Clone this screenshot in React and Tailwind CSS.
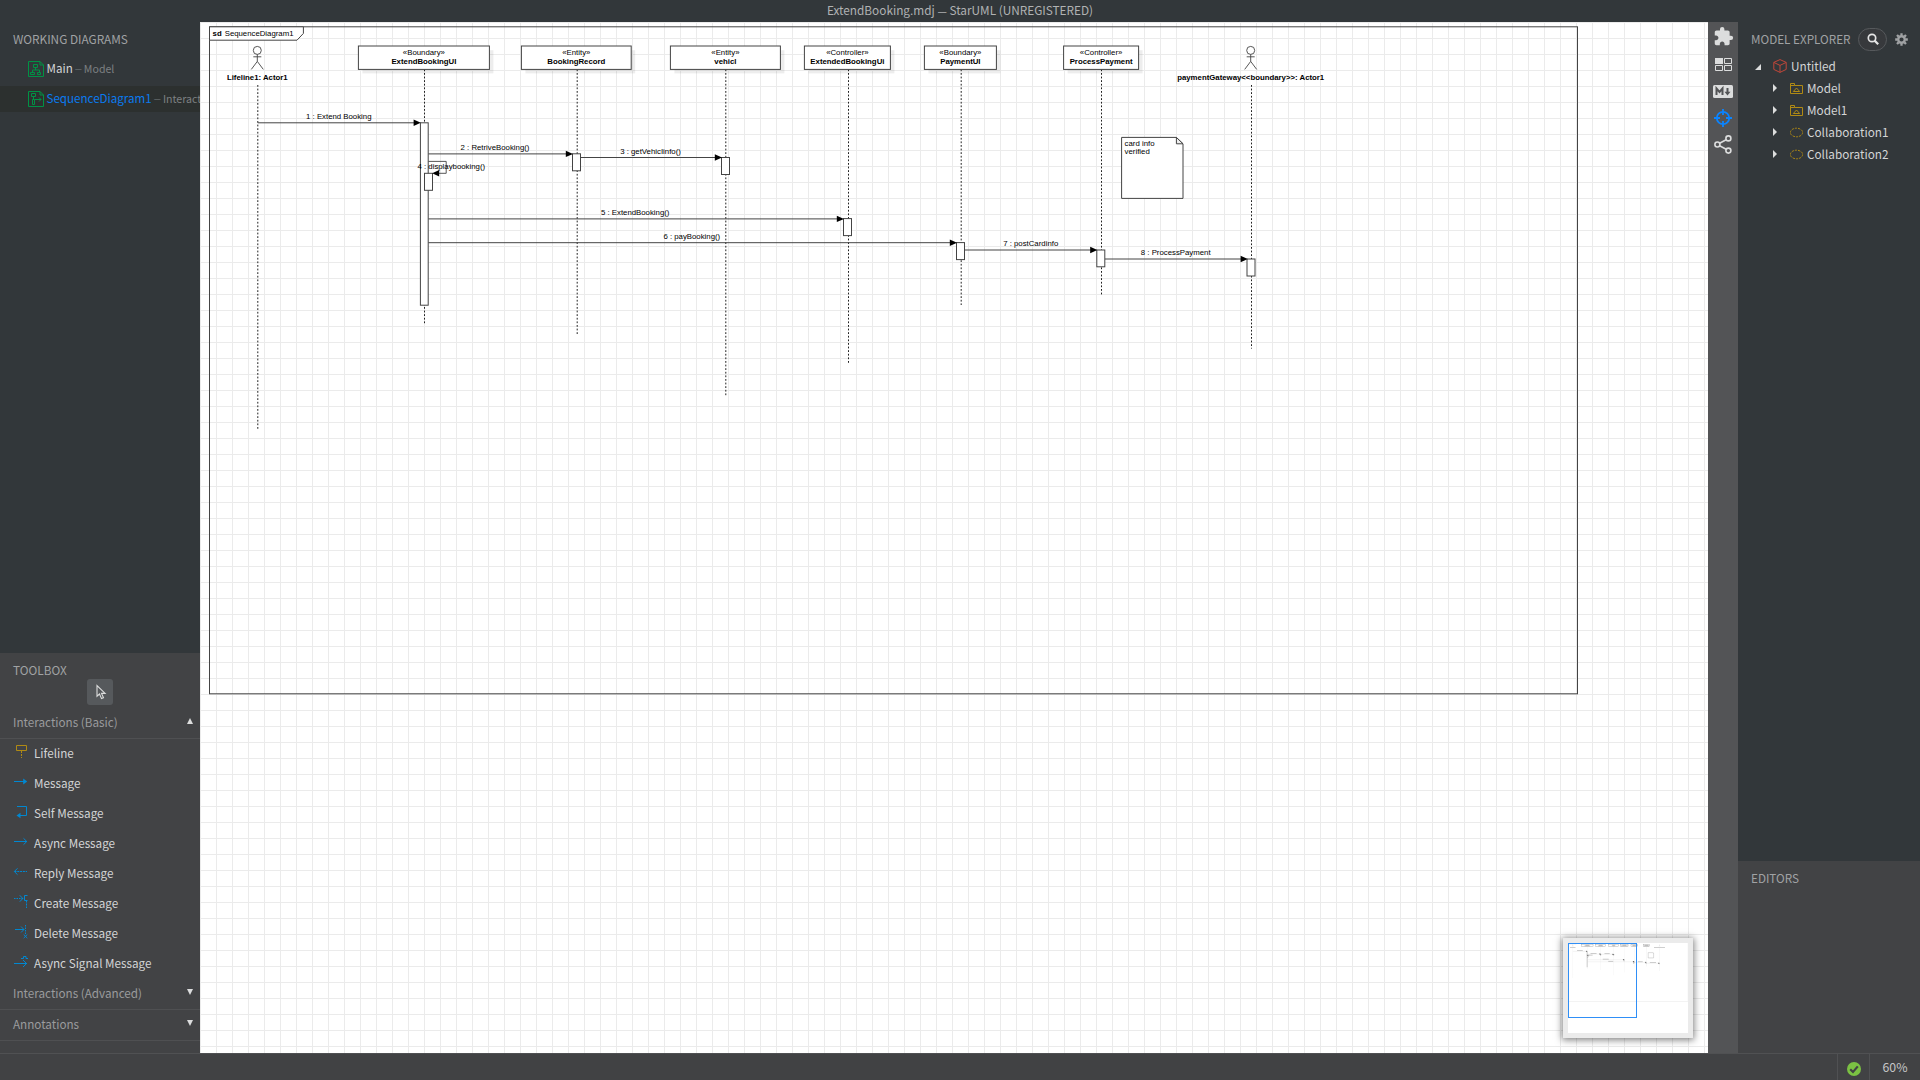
import React from "react";
import { MdExtension } from "react-icons/md";

const LINE = "#444";

const lifelines = [
  { name: "ExtendBookingUI", type: "«Boundary»", x1: 358.4, x2: 489.4, axis: 424.5, end: 324 },
  { name: "BookingRecord", type: "«Entity»", x1: 521.4, x2: 631.2, axis: 577.2, end: 334 },
  { name: "vehicl", type: "«Entity»", x1: 670.4, x2: 780.4, axis: 725.8, end: 396 },
  { name: "ExtendedBookingUi", type: "«Controller»", x1: 804.4, x2: 890.4, axis: 848.5, end: 363 },
  { name: "PaymentUI", type: "«Boundary»", x1: 924.4, x2: 996.4, axis: 961.2, end: 305 },
  { name: "ProcessPayment", type: "«Controller»", x1: 1063.6, x2: 1138.6, axis: 1101.5, end: 295 },
];

const actors = [
  { name: "Lifeline1: Actor1", cx: 257.3, axis: 257.8, end: 430 },
  { name: "paymentGateway<<boundary>>: Actor1", cx: 1250.7, axis: 1251.5, end: 348.6 },
];

const activations = [
  [420.4, 122.8, 7.8, 182.4],
  [572.5, 153.8, 8, 17],
  [721.5, 157.5, 8, 17],
  [424.5, 173.3, 8, 17],
  [843.5, 218.6, 8, 17],
  [956.5, 242.6, 8, 17],
  [1096.8, 250, 8, 16.8],
  [1247, 259, 8, 17],
];

const messages = [
  { label: "1 : Extend Booking", x1: 257.8, x2: 420.8, y: 122.8, cx: 338.8, by: 118.6, w: 65 },
  { label: "2 : RetriveBooking()", x1: 428.4, x2: 573, y: 153.9, cx: 495, by: 149.7, w: 68.5 },
  { label: "3 : getVehicIinfo()", x1: 580.6, x2: 722, y: 157.5, cx: 650.5, by: 153.8, w: 59.8 },
  { label: "5 : ExtendBooking()", x1: 428.4, x2: 844, y: 218.9, cx: 635.2, by: 215, w: 68.5 },
  { label: "6 : payBooking()", x1: 428.4, x2: 957, y: 242.7, cx: 691.8, by: 239, w: 56.5 },
  { label: "7 : postCardinfo", x1: 964.6, x2: 1097.4, y: 250, cx: 1030.7, by: 246, w: 55 },
  { label: "8 : ProcessPayment", x1: 1105, x2: 1247.8, y: 259, cx: 1175.7, by: 255, w: 70 },
];

function Label({ x, y, w, bold, mini, children }) {
  if (mini) {
    return <rect x={x - w / 2} y={y - 6} width={w} height={6} fill="#000" opacity={0.5} />;
  }
  return (
    <text x={x} y={y} textAnchor="middle" fontWeight={bold ? 700 : 400}>
      {children}
    </text>
  );
}

function Diagram({ mini }) {
  const boxStroke = mini ? 3 : 1;
  return (
    <g fontFamily="'Liberation Sans', Arial, sans-serif" fontSize="7.8" fill="#000">
      <g fill="none" stroke={LINE} strokeWidth="1">
        <rect x="209.5" y="26.8" width="1368" height="667" />
        <path d="M209.5 26.8H303.4V33.4L297 40.2H209.5Z" fill="#fff" />
      </g>
      {!mini && (
        <>
          <text x="212.6" y="36" fontWeight="700">sd</text>
          <text x="224.7" y="36" textLength="68.8">SequenceDiagram1</text>
        </>
      )}

      {actors.map((a) => (
        <g key={a.name}>
          <g fill="none" stroke={LINE} strokeWidth="0.9">
            <circle cx={a.cx} cy="50.4" r="4" />
            <path d={`M${a.cx - 4} 56.8h8M${a.cx} 54.4v7l-6 8M${a.cx} 61.4l6 8`} />
          </g>
          <path d={`M${a.axis} 85V${a.end}`} stroke="#222" strokeWidth="1" strokeDasharray="1.8 1.8" fill="none" />
          <Label x={a.cx} y={80} w={a.name.length * 3.7} bold mini={mini}>{a.name}</Label>
        </g>
      ))}

      {lifelines.map((l) => {
        const cx = (l.x1 + l.x2) / 2;
        return (
          <g key={l.name}>
            <path d={`M${l.axis} 69.4V${l.end}`} stroke="#222" strokeWidth="1" strokeDasharray="1.8 1.8" />
            <rect x={l.x1 + 4} y="50.2" width={l.x2 - l.x1} height="23.2" fill="#000" opacity="0.07" />
            <rect x={l.x1} y="46" width={l.x2 - l.x1} height="23.4" fill="#fff" stroke={LINE} strokeWidth={boxStroke} />
            <Label x={cx} y={55} w={40} mini={mini}>{l.type}</Label>
            <Label x={cx} y={63.6} w={l.name.length * 4.3} bold mini={mini}>{l.name}</Label>
          </g>
        );
      })}

      {activations.map(([x, y, w, h]) => (
        <rect key={`${x}-${y}`} x={x} y={y} width={w} height={h} fill="#fff" stroke={LINE} strokeWidth={boxStroke} />
      ))}

      {messages.map((m) => (
        <g key={m.label}>
          <path d={`M${m.x1} ${m.y}H${m.x2 - 4}`} stroke={LINE} strokeWidth="1" />
          <path d={`M${m.x2} ${m.y}l-7.2 -3.2v6.4Z`} fill="#000" stroke={mini ? "#000" : "none"} strokeWidth="6" />
          <Label x={m.cx} y={m.by} w={m.w} mini={mini}>{m.label}</Label>
        </g>
      ))}

      <path d="M428.4 161.4H446.2V173.3H437" fill="none" stroke={LINE} strokeWidth="0.9" />
      <path d="M432.2 173.3l7 -3.2v6.4Z" />
      <Label x={451.3} y={169} w={67} mini={mini}>4 : displaybooking()</Label>

      <path d="M1121.6 137.4H1176.4L1183 143.8V198.4H1121.6Z" fill="#fff" stroke={LINE} strokeWidth={boxStroke} />
      <path d="M1176.4 137.4V143.8H1183Z" fill="#eee" stroke={LINE} strokeWidth="1" />
      {!mini && (
        <>
          <text x="1124.6" y="146">card info</text>
          <text x="1124.6" y="154">verified</text>
        </>
      )}
    </g>
  );
}

function Canvas() {
  return (
    <svg className="block h-[1031px] w-[1508px]" viewBox="200 22 1508 1031">
      <defs>
        <pattern id="grid" x="200" y="22" width="16" height="16" patternUnits="userSpaceOnUse">
          <path d="M0 0.5H16M0.5 0V16" stroke="#ebebeb" strokeWidth="1" />
        </pattern>
      </defs>
      <rect x="200" y="22" width="1508" height="1031" fill="#fff" />
      <rect x="200" y="22" width="1508" height="1031" fill="url(#grid)" />
      <Diagram />
    </svg>
  );
}

function MiniMap() {
  return (
    <div className="absolute right-[15px] bottom-[15px] h-[100px] w-[130px] border-[5px] border-[#ebebeb] bg-white shadow-[0_1px_7px_1px_rgba(0,0,0,0.5)]">
      <svg className="block h-[90px] w-[120px]" viewBox="0 0 120 90">
        <g transform="translate(-17.7 -2.4) scale(0.0873)" opacity="0.7">
          <Diagram mini />
        </g>
        <rect x="0.5" y="0.5" width="68" height="74" fill="none" stroke="#2f8ff7" />
      </svg>
    </div>
  );
}

function DiagramIcon({ sequence }) {
  return (
    <svg className="h-4 w-4 shrink-0" viewBox="0 0 16 16" fill="none" stroke="#009245" strokeWidth="1">
      <path d="M0.5 0.5H12L15.5 4V15.5H0.5ZM12 0.5V4H15.5" />
      {sequence ? (
        <path d="M3.5 2.5h4v3h-4zM5.5 5.5V8M4.5 8.5h2v5h-2zM6.5 8.5H13M11 6.5l2 2l-2 2" />
      ) : (
        <path d="M5.5 3.5h4v3h-4zM7.5 6.5V9M4.5 11V9h7v2M2.5 11.5h4v2h-4zM9.5 11.5h3v2h-3z" />
      )}
    </svg>
  );
}

const toolIcons = {
  Lifeline: (
    <g stroke="#b08a14">
      <path d="M3.5 2.5h10v5h-10z" />
      <path d="M8.5 8v7" strokeDasharray="2 1" />
    </g>
  ),
  Message: (
    <g>
      <path d="M1 8.5H11" />
      <path d="M10.2 5.5l4 3l-4 3z" fill="#0088d1" stroke="none" />
    </g>
  ),
  "Self Message": (
    <g>
      <path d="M4 3.5H13.5V12.5H6" />
      <path d="M7.5 9.8v5.4l-4 -2.7z" fill="#0088d1" stroke="none" />
    </g>
  ),
  "Async Message": <path d="M1 8.5H14M10.5 5.3l3.3 3.2l-3.3 3.2" />,
  "Reply Message": (
    <g>
      <path d="M1.5 8.5H14" strokeDasharray="2 0.8" />
      <path d="M4.5 5.3L1.3 8.5L4.5 11.7" />
    </g>
  ),
  "Create Message": (
    <g>
      <path d="M1 5.5H10" strokeDasharray="1.5 1" />
      <path d="M6.8 2.3l3 3.2l-3 3.2M14.5 2.5H11.5V7.5H14.5" />
      <path d="M13.5 7.5V15" strokeDasharray="2 1" />
    </g>
  ),
  "Delete Message": (
    <g>
      <path d="M2 6.5H11M8 3.5l3 3l-3 3" />
      <path d="M12.5 2V11" strokeDasharray="1.5 1" />
      <path d="M10.7 11.5l3.6 3.6M14.3 11.5l-3.6 3.6" />
    </g>
  ),
  "Async Signal Message": (
    <g>
      <path d="M1 10.5H14M10 7l3.6 3.5l-3.6 3.5" />
      <path d="M8 5.5h2.5v-2h2.5v2H15" />
    </g>
  ),
};

function Tool({ name }) {
  return (
    <div className="flex h-[30px] items-center pl-[13px] text-[#d4d5d6]">
      <svg className="mt-[-6px] h-4 w-4 shrink-0" viewBox="0 0 16 16" fill="none" stroke="#0088d1" strokeWidth="1">
        {toolIcons[name]}
      </svg>
      <span className="mt-[-3px] ml-[5px] text-[11.7px] leading-5 whitespace-nowrap">{name}</span>
    </div>
  );
}

function Section({ title, open }) {
  return (
    <div className="flex h-[31px] items-center justify-between border-b border-[#4f5052] pr-[7px] pl-[13px] text-[#9a9b9d]">
      <span className="mt-[-3px] text-[11.7px] leading-5">{title}</span>
      <svg className="mt-[-4px] h-[6px] w-[6px]" viewBox="0 0 6 6" fill="#dcdddd">
        <path d={open ? "M3 0L6 6H0Z" : "M0 0H6L3 6Z"} />
      </svg>
    </div>
  );
}

function Sub({ children }) {
  return (
    <span className="mt-[-1px] ml-[2px] flex items-center text-[10.6px] leading-5 text-[#7d8082]">
      <span className="mr-[2px] text-[8px]">—</span>
      {children}
    </span>
  );
}

function LeftPanel() {
  return (
    <aside className="flex w-[200px] shrink-0 flex-col overflow-hidden">
      <div className="h-[631px] bg-[#32373a] pt-[7px]">
        <div className="h-[22px] pl-[13px] text-[11.8px] leading-[20px] text-[#a0a2a4]">WORKING DIAGRAMS</div>
        <div className="mt-[5px] flex h-[26px] items-center pl-7 whitespace-nowrap">
          <DiagramIcon />
          <span className="mt-[-2px] ml-[2.5px] text-[11.6px] leading-5 text-[#d4d5d6]">Main</span>
          <Sub>Model</Sub>
        </div>
        <div className="mt-1 flex h-[26px] items-center bg-[#2c302f] pl-7 whitespace-nowrap">
          <DiagramIcon sequence />
          <span className="mt-[-2px] ml-[2.5px] text-[11.6px] leading-5 text-[#0a7bf0]">SequenceDiagram1</span>
          <Sub>Interact</Sub>
        </div>
      </div>
      <div className="flex-1 bg-[#424345] pt-[7px]">
        <div className="h-[19px] pl-[13px] text-[11.8px] leading-[20px] text-[#a0a2a4]">TOOLBOX</div>
        <div className="mx-auto flex h-[26px] w-[26px] items-center justify-center rounded-[3px] bg-[#56595c]">
          <svg className="h-4 w-4" viewBox="0 0 16 16" fill="none" stroke="#dcdddd" strokeWidth="1.1">
            <path d="M5 1.5V12.2L7.5 10L9.5 14.6L11.5 13.7L9.5 9.4H13.1Z" />
          </svg>
        </div>
        <div className="mt-[3px]">
          <Section title="Interactions (Basic)" open />
          {Object.keys(toolIcons).map((n) => (
            <Tool key={n} name={n} />
          ))}
          <Section title="Interactions (Advanced)" />
          <Section title="Annotations" />
        </div>
      </div>
    </aside>
  );
}

function IconBar() {
  return (
    <div className="flex w-[30px] shrink-0 flex-col items-center bg-[#535456] text-[#dcdddd]">
      <MdExtension className="mt-[4px] h-[21px] w-[21px]" />
      <svg className="mt-[11px] h-[13px] w-[17px]" viewBox="0 0 17 13" fill="none" stroke="currentColor">
        <rect x="0" y="0" width="8" height="6" fill="currentColor" stroke="none" />
        <path d="M9.5 0.5h7v5h-7zM0.5 7.5h7v5h-7zM9.5 7.5h7v5h-7z" />
      </svg>
      <svg className="mt-[14px] h-[13px] w-5" viewBox="0 0 20 13">
        <rect width="20" height="13" rx="1.5" fill="currentColor" />
        <path d="M3.5 10V3.5L6.5 7L9.5 3.5V10" fill="none" stroke="#535456" strokeWidth="2" />
        <path d="M14.5 3V8" stroke="#535456" strokeWidth="2" />
        <path d="M11.5 6.7h6L14.5 10.5Z" fill="#535456" />
      </svg>
      <svg className="mt-[11px] h-[18px] w-[18px]" viewBox="0 0 18 18" fill="none" stroke="#0a84ff" strokeWidth="1.8">
        <circle cx="9" cy="9" r="6.2" />
        <path d="M9 0V6M9 12V18M0 9H6M12 9H18" />
      </svg>
      <svg className="mt-[8px] h-[19px] w-[18px]" viewBox="0 0 18 19" fill="none" stroke="currentColor" strokeWidth="1.6">
        <circle cx="3.4" cy="9.5" r="2.5" />
        <circle cx="14.4" cy="3.4" r="2.5" />
        <circle cx="14.4" cy="15.6" r="2.5" />
        <path d="M5.6 8.3L12.2 4.7M5.6 10.7L12.2 14.3" />
      </svg>
    </div>
  );
}

function ModelIcon() {
  return (
    <svg className="h-[11px] w-[13px]" viewBox="0 0 13 11" fill="none" stroke="#b08a14">
      <path d="M0.5 10.5V0.5H4.5V2.5H12.5V10.5ZM0.5 2.5H4.5M3.3 8.5H9.7L6.5 5Z" />
    </svg>
  );
}

function CollabIcon() {
  return (
    <svg className="h-[11px] w-[14px]" viewBox="0 0 14 11" fill="none" stroke="#b08a14">
      <ellipse cx="6.5" cy="5.5" rx="6.1" ry="4.3" strokeDasharray="2.2 1" />
    </svg>
  );
}

function TreeRow({ icon, label }) {
  return (
    <div className="flex h-[22px] items-center pl-[35px]">
      <svg className="h-2 w-[4px]" viewBox="0 0 4 8" fill="#dcdddd">
        <path d="M0 0L4 4L0 8Z" />
      </svg>
      <div className="ml-3 flex w-[15px] justify-center">{icon}</div>
      <span className="ml-[3px] text-[11.75px] leading-5">{label}</span>
    </div>
  );
}

function RightPanel() {
  return (
    <aside className="flex w-[182px] shrink-0 flex-col">
      <div className="h-[839px] bg-[#32373a] pt-[5px] text-[#d4d5d6]">
        <div className="flex h-6 items-center pl-[13px]">
          <span className="w-[107px] text-[11.7px] leading-[20px] whitespace-nowrap text-[#a0a2a4]">MODEL EXPLORER</span>
          <div className="flex h-[23px] w-[29px] items-center justify-center rounded-full border border-[#56595c] bg-[#37393c]">
            <svg className="h-3 w-3" viewBox="0 0 12 12" fill="none" stroke="#e4e4e4" strokeWidth="1.7">
              <circle cx="5" cy="5" r="3.7" />
              <path d="M7.6 7.6L11.2 11.2" strokeWidth="2.2" />
            </svg>
          </div>
          <svg className="ml-2 h-[13px] w-[13px]" viewBox="0 0 13 13" fill="none" stroke="#a0a2a4">
            <circle cx="6.5" cy="6.5" r="3.3" strokeWidth="2.4" />
            <path d="M6.5 0.2V2.4M6.5 10.6V12.8M0.2 6.5H2.4M10.6 6.5H12.8M2 2L3.6 3.6M9.4 9.4L11 11M11 2L9.4 3.6M3.6 9.4L2 11" strokeWidth="2.3" />
          </svg>
        </div>
        <div className="mt-1 flex h-[22px] items-center pl-[17px]">
          <svg className="mt-px h-[6px] w-[6px]" viewBox="0 0 6 6" fill="#dcdddd">
            <path d="M6 0V6H0Z" />
          </svg>
          <svg className="ml-3 h-[14px] w-[14px]" viewBox="0 0 14 14" fill="none" stroke="#c0473a">
            <path d="M7 0.6L13.2 3.4V10.4L7 13.4L0.8 10.4V3.4ZM0.8 3.4L7 6.4L13.2 3.4M7 6.4V13.4" />
          </svg>
          <span className="ml-1 text-[11.75px] leading-5">Untitled</span>
        </div>
        <TreeRow icon={<ModelIcon />} label="Model" />
        <TreeRow icon={<ModelIcon />} label="Model1" />
        <TreeRow icon={<CollabIcon />} label="Collaboration1" />
        <TreeRow icon={<CollabIcon />} label="Collaboration2" />
      </div>
      <div className="flex-1 bg-[#424345] pt-[7px]">
        <div className="pl-[13px] text-[11.7px] leading-[20px] text-[#a0a2a4]">EDITORS</div>
      </div>
    </aside>
  );
}

export default function App() {
  return (
    <div className="flex h-[1080px] w-[1920px] flex-col overflow-hidden bg-[#32373a] font-['Noto_Sans_CJK_SC',sans-serif]">
      <header className="flex h-[22px] shrink-0 items-center justify-center bg-[#32373a]">
        <span className="mt-[-1px] text-[11.8px] leading-5 text-[#b0b2b3]">
          ExtendBooking.mdj <span className="text-[10.5px]">—</span> StarUML (UNREGISTERED)
        </span>
      </header>
      <div className="flex h-[1031px] shrink-0">
        <LeftPanel />
        <main className="relative w-[1508px] shrink-0">
          <Canvas />
          <MiniMap />
        </main>
        <IconBar />
        <RightPanel />
      </div>
      <footer className="flex h-[27px] shrink-0 justify-end border-t border-[#505153] bg-[#414244]">
        <div className="flex w-8 items-center justify-center border-l border-[#505153]">
          <svg className="mt-[3px] h-[14px] w-[14px]" viewBox="0 0 14 14">
            <circle cx="7" cy="7" r="7" fill="#7bc143" />
            <path d="M3.2 7.2L6 10L10.8 4.4" fill="none" stroke="#414244" strokeWidth="2.2" />
          </svg>
        </div>
        <div className="flex w-[51px] items-center justify-center border-l border-[#505153] text-[12.3px] leading-5 text-[#c6c7c8]">
          60%
        </div>
      </footer>
    </div>
  );
}
